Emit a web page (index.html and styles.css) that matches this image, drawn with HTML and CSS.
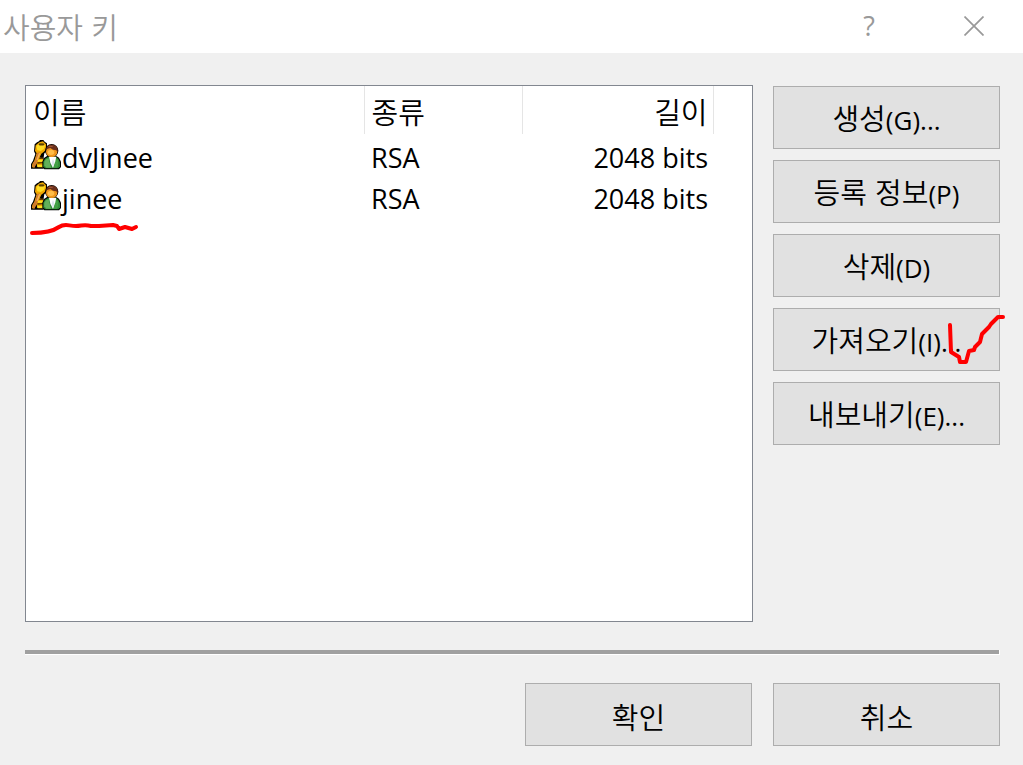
FILE: index.html
```html
<!DOCTYPE html>
<html lang="ko">
<head>
    <meta charset="UTF-8">
    <meta name="viewport" content="width=device-width, initial-scale=1.0">
    <title>사용자 키</title>
    <link rel="stylesheet" href="styles.css">
</head>
<body>
    <!-- Shared user key icon -->
    <svg class="symbols" aria-hidden="true">
        <symbol id="user-key" viewBox="0 0 90 90">
            <path d="M11 13 L18 7 L24 4 L27 0 H37 L41 5 L48 10 V33 L40 40 L38 52 V86 H0 V72 L6 62 L13 42 L9 34 Z" fill="#000"/>
            <path d="M14 16 L25 7 L36 4 L45 13 V29 L37 37 L31 41 L26 52 L37 56 L36 82 L20 82 L16 70 L10 83 L3 81 L4 72 L10 62 L17 40 L12 32 Z" fill="#f0a800"/>
            <path d="M16 19 L26 9 H36 L42 17 L39 27 L29 33 L19 31 Z" fill="#ffdc22"/>
            <path d="M18 39 L29 37 L22 56 L11 82 H4 L6 70 L12 61 Z" fill="#d07a2c"/>
            <path d="M26 40 L18 60" fill="none" stroke="#f6b258" stroke-width="4"/>
            <path d="M25 55 L36 54 M19 69 L36 68" fill="none" stroke="#5a3000" stroke-width="4"/>
            <path d="M21 62 H35 M19 78 H36" stroke="#ffe11f" stroke-width="6"/>
            <path d="M27 13 H36" fill="none" stroke="#604000" stroke-width="7" stroke-linecap="round"/>
            <path d="M34 80 V65 L39 54 L48 48 H76 L84 53 L90 65 V81 L84 88 H40 Z" fill="#000"/>
            <circle cx="62" cy="32" r="20" fill="#000"/>
            <path d="M37 79 V65 L42 56 L52 50 H74 L82 56 L87 67 V79 L82 85 H42 Z" fill="#2e8a37"/>
            <path d="M40 76 V65 L45 58 L53 55 L60 83 H46 Z" fill="#63b05a"/>
            <path d="M75 54 L82 62 V77 L77 83 H68 Z" fill="#43a045"/>
            <path d="M54 50 H76 L73 64 L66 84 L58 68 Z" fill="#fff"/>
            <path d="M66 56 L70 68 L66 82 L62 68 Z" fill="#dce5ee"/>
            <ellipse cx="62" cy="35" rx="17" ry="16" fill="#ee951c"/>
            <ellipse cx="60" cy="37" rx="10" ry="8" fill="#ffbd48"/>
            <path d="M45 28 L48 20 L56 14 H68 L76 19 L80 27 V38 L76 31 L66 29 L58 24 Z" fill="#6b2f1b"/>
            <path d="M53 19 H65" fill="none" stroke="#a65c3c" stroke-width="3"/>
        </symbol>
    </svg>

    <div class="dialog">
        <header class="titlebar">
            <h1>사용자 키</h1>
            <div class="window-controls">
                <button type="button" class="window-btn" aria-label="도움말">?</button>
                <button type="button" class="window-btn close-btn" aria-label="닫기">
                    <svg width="20" height="20" viewBox="0 0 20 20" aria-hidden="true">
                        <path d="M0.5 0.5 L19.5 19.5 M19.5 0.5 L0.5 19.5" fill="none" stroke="#999" stroke-width="1.7"/>
                    </svg>
                </button>
            </div>
        </header>

        <main class="content">
            <div class="key-list">
                <table>
                    <colgroup>
                        <col class="col-name">
                        <col class="col-type">
                        <col class="col-length">
                        <col>
                    </colgroup>
                    <thead>
                        <tr>
                            <th scope="col">이름</th>
                            <th scope="col">종류</th>
                            <th scope="col" class="length">길이</th>
                            <td></td>
                        </tr>
                    </thead>
                    <tbody>
                        <tr>
                            <td>
                                <div class="key-name">
                                    <svg class="key-icon" aria-hidden="true"><use href="#user-key"/></svg>
                                    <span>dvJinee</span>
                                </div>
                            </td>
                            <td>RSA</td>
                            <td class="length">2048 bits</td>
                            <td></td>
                        </tr>
                        <tr>
                            <td>
                                <div class="key-name">
                                    <svg class="key-icon" aria-hidden="true"><use href="#user-key"/></svg>
                                    <span>jinee</span>
                                    <svg class="mark underline-mark" viewBox="0 0 110 16" aria-hidden="true">
                                        <path d="M3 12 C13 12 23 11 30 6 C36 2 39 5 47 5 C53 5 55 3 62 5 L70 5 L84 4 L88 5 L90 8 L96 6 L103 8 L107 6"/>
                                    </svg>
                                </div>
                            </td>
                            <td>RSA</td>
                            <td class="length">2048 bits</td>
                            <td></td>
                        </tr>
                    </tbody>
                </table>
            </div>

            <div class="actions">
                <button type="button" class="btn">생성<span class="latin">(G)...</span></button>
                <button type="button" class="btn">등록 정보<span class="latin">(P)</span></button>
                <button type="button" class="btn">삭제<span class="latin">(D)</span></button>
                <button type="button" class="btn">가져오기<span class="latin">(I)...</span>
                    <svg class="mark check-mark" viewBox="0 0 60 54" aria-hidden="true">
                        <path d="M4 12 L5 39 L13 44 L14 49 L20 49 L23 38 L28 37 L29 34 L34 29 L36 21 L43 14 L45 11 L52 4 L57 4"/>
                    </svg>
                </button>
                <button type="button" class="btn">내보내기<span class="latin">(E)...</span></button>
            </div>
        </main>

        <hr class="divider">

        <footer class="footer">
            <button type="button" class="btn">확인</button>
            <button type="button" class="btn">취소</button>
        </footer>
    </div>
</body>
</html>
```
FILE: styles.css
```css
:root {
    --face: #f0f0f0;
    --button: #e1e1e1;
    --button-border: #adadad;
    --muted: #999;
    --ink: #f00;
    --hangul: "Noto Sans CJK KR", sans-serif;
    --latin: "Open Sans", "Noto Sans CJK KR", sans-serif;
}

* {
    margin: 0;
    padding: 0;
    box-sizing: border-box;
}

body {
    font-family: var(--hangul);
    font-size: 29px;
    font-weight: 350;
    line-height: 40px;
    background: var(--face);
    color: #000;
}

.symbols {
    position: absolute;
    width: 0;
    height: 0;
}

.dialog {
    min-height: 100vh;
    display: flex;
    flex-direction: column;
}

.titlebar {
    height: 53px;
    padding: 0 0 2px 3px;
    display: flex;
    align-items: center;
    justify-content: space-between;
    background: #fff;
    color: var(--muted);
}

.titlebar h1 {
    font-size: 29px;
    font-weight: 350;
}

.window-controls {
    display: flex;
    align-self: stretch;
}

.window-btn {
    width: 112px;
    display: flex;
    align-items: center;
    justify-content: center;
    border: none;
    background: none;
    color: var(--muted);
    font-family: var(--latin);
    font-size: 27px;
}

.close-btn {
    width: 98px;
}

.content {
    flex: 1;
    display: flex;
    gap: 20px;
    padding: 32px 23px 28px 25px;
}

.key-list {
    flex: 1;
    background: #fff;
    border: 1px solid #828790;
}

.key-list table {
    width: 100%;
    table-layout: fixed;
    border-collapse: collapse;
}

.col-name {
    width: 338px;
}

.col-type {
    width: 158px;
}

.col-length {
    width: 191px;
}

.key-list th {
    height: 48px;
    padding: 2px 5px 0 7px;
    border-right: 1px solid #e5e5e5;
    font-weight: 350;
    text-align: left;
}

.key-list tbody::before {
    content: '';
    display: block;
    height: 3px;
}

.key-list tbody td {
    height: 41px;
    padding: 0 5px 0 7px;
    font-family: var(--latin);
    font-size: 27px;
    font-weight: 400;
}

.key-list .length {
    text-align: right;
}

.key-name {
    position: relative;
    display: flex;
    align-items: flex-start;
    gap: 1px;
}

.key-icon {
    width: 30px;
    height: 30px;
    margin-top: 2px;
}

.key-list tbody td:first-child {
    padding-left: 5px;
}

.actions {
    padding-top: 1px;
    display: flex;
    flex-direction: column;
    gap: 11px;
}

.btn {
    position: relative;
    width: 227px;
    height: 63px;
    padding-top: 2px;
    background: var(--button);
    border: 1px solid var(--button-border);
    color: #000;
    font-family: var(--hangul);
    font-size: 29px;
    font-weight: 350;
    line-height: 40px;
    white-space: nowrap;
}

.btn:hover {
    background: #e5f1fb;
    border-color: #0078d7;
}

.latin {
    font-family: var(--latin);
    font-size: 26px;
    font-weight: 400;
}

.divider {
    height: 5px;
    margin: 0 23px 0 25px;
    border: none;
    border-right: 1px solid #fff;
    border-bottom: 1px solid #fff;
    background: #a0a0a0;
}

.footer {
    display: flex;
    justify-content: flex-end;
    gap: 21px;
    padding: 28px 23px 19px;
}

/* Red pen marks drawn over the dialog */
.mark {
    position: absolute;
    fill: none;
    stroke: var(--ink);
    stroke-width: 4;
    stroke-linecap: round;
    stroke-linejoin: round;
    pointer-events: none;
}

.underline-mark {
    top: 42px;
    left: -2px;
    width: 110px;
    height: 16px;
}

.check-mark {
    top: 4px;
    right: -7px;
    width: 60px;
    height: 54px;
}
```
